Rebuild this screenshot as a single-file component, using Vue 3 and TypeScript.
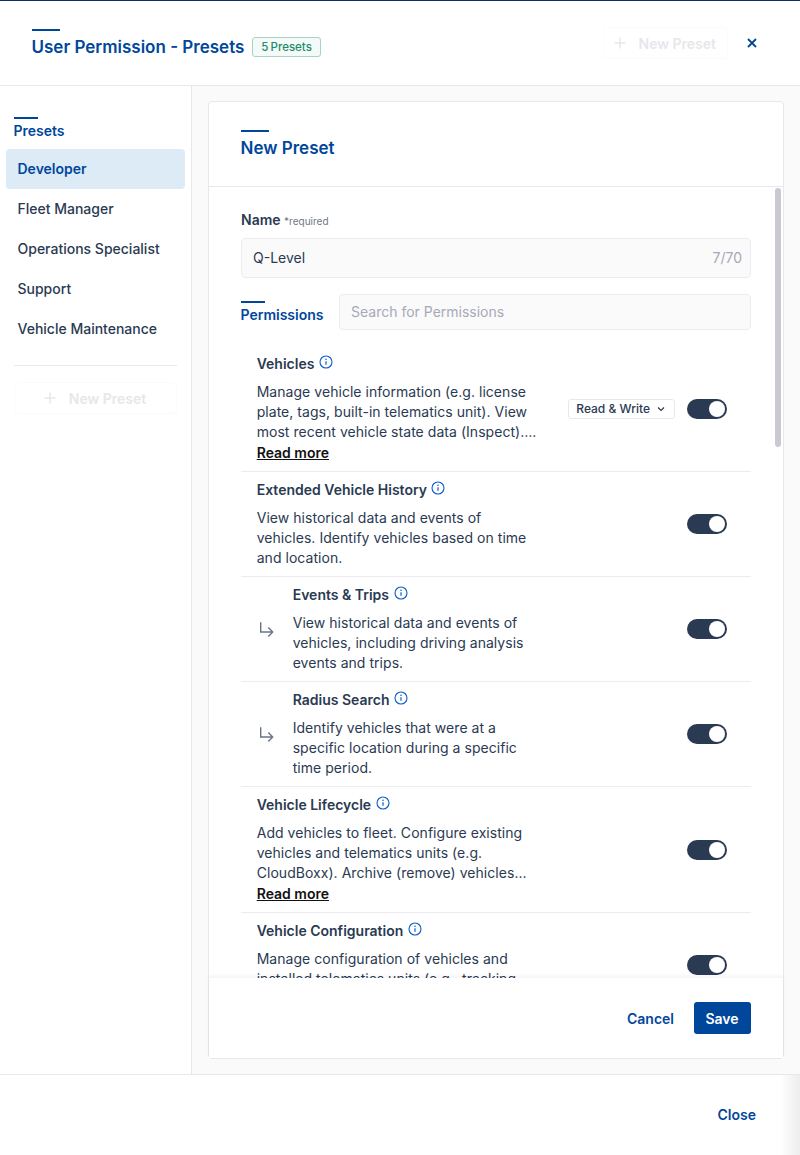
<script setup lang="ts">
interface Permission {
  title: string;
  desc: string;
  child?: boolean;
  more?: boolean;
  access?: string;
}

const presets = ['Developer', 'Fleet Manager', 'Operations Specialist', 'Support', 'Vehicle Maintenance'];

const permissions: Permission[] = [
  {
    title: 'Vehicles',
    desc: 'Manage vehicle information (e.g. license plate, tags, built-in telematics unit). View most recent vehicle state data (Inspect)….',
    more: true,
    access: 'Read & Write',
  },
  {
    title: 'Extended Vehicle History',
    desc: 'View historical data and events of vehicles. Identify vehicles based on time and location.',
  },
  {
    title: 'Events & Trips',
    desc: 'View historical data and events of vehicles, including driving analysis events and trips.',
    child: true,
  },
  {
    title: 'Radius Search',
    desc: 'Identify vehicles that were at a specific location during a specific time period.',
    child: true,
  },
  {
    title: 'Vehicle Lifecycle',
    desc: 'Add vehicles to fleet. Configure existing vehicles and telematics units (e.g. CloudBoxx). Archive (remove) vehicles...',
    more: true,
  },
  {
    title: 'Vehicle Configuration',
    desc: 'Manage configuration of vehicles and installed telematics units (e.g., tracking interval, lock settings).',
  },
];
</script>

<template>
  <div class="modal">
    <header class="modal-head">
      <div class="heading">
        <h1 class="title accent">User Permission - Presets</h1>
        <span class="badge">5 Presets</span>
      </div>
      <div class="head-actions">
        <button class="ghost-btn" type="button">
          <svg viewBox="0 0 16 16" width="16" height="16"><path d="M8 2.5v11M2.5 8h11" fill="none" stroke="currentColor" stroke-width="1.4" /></svg>
          New Preset
        </button>
        <svg class="close-x" viewBox="0 0 12 12" width="12" height="12"><path d="M2 2l8 8M10 2l-8 8" fill="none" stroke="currentColor" stroke-width="1.8" /></svg>
      </div>
    </header>

    <div class="modal-body">
      <aside class="sidebar">
        <h2 class="side-title accent">Presets</h2>
        <ul class="preset-list">
          <li v-for="(p, i) in presets" :key="p" class="preset" :class="{ active: i === 0 }">{{ p }}</li>
        </ul>
        <div class="side-rule"></div>
        <button class="ghost-btn wide" type="button">
          <svg viewBox="0 0 16 16" width="16" height="16"><path d="M8 2.5v11M2.5 8h11" fill="none" stroke="currentColor" stroke-width="1.4" /></svg>
          New Preset
        </button>
      </aside>

      <main class="content">
        <section class="card">
          <div class="card-head">
            <h2 class="card-title accent">New Preset</h2>
          </div>

          <div class="card-scroll">
            <div class="thumb"></div>
            <div class="form">
              <div class="name-label">Name <small>*required</small></div>
              <div class="field name-field">
                <span>Q-Level</span>
                <span class="count">7/70</span>
              </div>
              <div class="perm-bar">
                <h3 class="perm-title accent">Permissions</h3>
                <div class="field search-field">Search for Permissions</div>
              </div>

              <div
                v-for="perm in permissions"
                :key="perm.title"
                class="perm-row"
                :class="{ child: perm.child }"
              >
                <svg v-if="perm.child" class="sub-arrow" viewBox="0 0 16 16" width="16" height="16">
                  <path d="M2.7 1.2v9.8h11M10.3 6.5l4.4 4.5-4.4 4.5" fill="none" stroke="currentColor" stroke-width="1.4" />
                </svg>
                <div class="perm-text">
                  <div class="perm-name">
                    {{ perm.title }}
                    <svg class="info" viewBox="0 0 14 14" width="14" height="14">
                      <circle cx="7" cy="7" r="6" fill="none" stroke="currentColor" stroke-width="1.1" />
                      <path d="M7 6.2v3.6" stroke="currentColor" stroke-width="1.2" />
                      <circle cx="7" cy="4.3" r="0.8" fill="currentColor" />
                    </svg>
                  </div>
                  <p class="perm-desc">{{ perm.desc }}</p>
                  <a v-if="perm.more" class="read-more">Read more</a>
                </div>
                <div class="perm-controls">
                  <div v-if="perm.access" class="access">
                    {{ perm.access }}
                    <svg viewBox="0 0 10 10" width="10" height="10"><path d="M2 3.5l3 3 3-3" fill="none" stroke="currentColor" stroke-width="1.2" /></svg>
                  </div>
                  <span class="toggle"><span class="knob"></span></span>
                </div>
              </div>
            </div>
          </div>

          <div class="card-foot">
            <button class="link-btn" type="button">Cancel</button>
            <button class="save-btn" type="button">Save</button>
          </div>
        </section>
      </main>
    </div>

    <footer class="modal-foot">
      <button class="link-btn" type="button">Close</button>
    </footer>
  </div>
</template>

<style>
html,
body {
  margin: 0;
  background: #fff;
}
</style>

<style scoped>
* {
  box-sizing: border-box;
}

.modal {
  width: 800px;
  height: 1155px;
  display: flex;
  flex-direction: column;
  overflow: hidden;
  background: #fff;
  border-top: 1px solid #0b2f66;
  font-family: Inter, "Liberation Sans", sans-serif;
  font-size: 14px;
  line-height: 20px;
  color: #2a3a52;
}

h1,
h2,
h3,
p,
ul {
  margin: 0;
  padding: 0;
}

.accent {
  position: relative;
  color: #00479b;
  font-weight: 600;
}

.accent::before {
  content: "";
  position: absolute;
  left: 0;
  top: -6px;
  width: 28px;
  height: 2px;
  background: #00479b;
}

.modal-head {
  height: 85px;
  flex: none;
  display: flex;
  align-items: center;
  justify-content: space-between;
  padding: 0 42px 0 31.5px;
  border-bottom: 1px solid #e8e8ea;
}

.heading {
  display: flex;
  align-items: center;
  gap: 8px;
  margin-top: 8px;
}

.title {
  font-size: 17px;
  line-height: 24px;
}

.badge {
  height: 20px;
  padding: 0 8px;
  border: 1px solid #a6d3c3;
  border-radius: 3px;
  background: #f4faf8;
  color: #1f8a6a;
  font-size: 11.5px;
  font-weight: 500;
  line-height: 18px;
  word-spacing: -1px;
}

.head-actions {
  display: flex;
  align-items: center;
  gap: 18px;
}

.close-x {
  color: #00479b;
}

.ghost-btn {
  display: flex;
  align-items: center;
  justify-content: center;
  gap: 11px;
  height: 32px;
  padding: 0 11px 0 8px;
  border: 1px solid #fbfbfb;
  border-radius: 4px;
  background: #fff;
  color: #e6e7eb;
  font: 600 14px Inter, sans-serif;
}

.ghost-btn.wide {
  width: 163px;
  margin-left: 14px;
}

.modal-body {
  flex: 1;
  min-height: 0;
  display: flex;
}

.sidebar {
  width: 192px;
  flex: none;
  padding-top: 35px;
  border-right: 1px solid #e8e8ea;
}

.side-title {
  width: max-content;
  margin-left: 13.5px;
  font-size: 14px;
  line-height: 20px;
}

.side-title::before {
  top: -4px;
  width: 24px;
}

.preset-list {
  list-style: none;
  margin-top: 8px;
  padding: 0 6px;
}

.preset {
  height: 40px;
  padding: 0 11.5px;
  border-radius: 4px;
  line-height: 40px;
  font-weight: 500;
}

.preset.active {
  background: #dcebf6;
  color: #00479b;
  font-weight: 600;
}

.side-rule {
  height: 1px;
  margin: 16px 14px;
  background: #e8e8ea;
}

.content {
  flex: 1;
  min-width: 0;
  padding: 15px 16px 15px 16px;
  background: #fafafa;
}

.card {
  height: 100%;
  display: flex;
  flex-direction: column;
  border: 1px solid #e8e8ea;
  border-radius: 4px;
  background: #fff;
}

.card-head {
  height: 85px;
  flex: none;
  padding: 34px 31.5px 0;
  border-bottom: 1px solid #e8e8ea;
}

.card-title {
  width: max-content;
  font-size: 17px;
  line-height: 24px;
}

.card-scroll {
  position: relative;
  flex: 1;
  min-height: 0;
  overflow: hidden;
}

.thumb {
  position: absolute;
  top: 1px;
  right: 2px;
  width: 6px;
  height: 259px;
  border-radius: 3px;
  background: #c9c9d3;
}

.form {
  padding: 23px 32px 0;
}

.name-label {
  font-weight: 600;
}

.name-label small {
  color: #6f7785;
  font-size: 10px;
  font-weight: 400;
}

.field {
  border: 1px solid #ececee;
  border-radius: 4px;
  background: #fafafa;
}

.name-field {
  height: 40px;
  margin-top: 7px;
  display: flex;
  align-items: center;
  justify-content: space-between;
  padding: 0 8px 0 11px;
}

.count {
  color: #a8a9b8;
}

.perm-bar {
  display: flex;
  align-items: flex-end;
  gap: 15.5px;
  margin-top: 16px;
}

.perm-title {
  width: max-content;
  margin-left: -0.5px;
  margin-bottom: 5px;
  font-size: 14px;
  line-height: 20px;
}

.perm-title::before {
  top: -4px;
  width: 24px;
}

.search-field {
  flex: 1;
  height: 36px;
  padding: 0 11px;
  color: #a8a9b8;
  line-height: 34px;
}

.perm-row {
  position: relative;
  display: flex;
  align-items: center;
  justify-content: space-between;
  padding: 8px 24px 8px 15.7px;
  border-bottom: 1px solid #ececee;
}

.perm-bar + .perm-row {
  margin-top: 16px;
}

.perm-row.child {
  padding-left: 51.7px;
}

.sub-arrow {
  position: absolute;
  left: 17px;
  top: 44px;
  color: #6b7486;
}

.perm-text {
  width: 284px;
}

.child .perm-text {
  width: 248px;
}

.perm-name {
  display: flex;
  align-items: center;
  gap: 4.5px;
  margin-bottom: 8px;
  font-weight: 600;
}

.info {
  position: relative;
  top: -2px;
  color: #0b5cc7;
}

.perm-desc {
  font-weight: 400;
  letter-spacing: 0.04px;
}

.read-more {
  display: block;
  height: 21px;
  padding-top: 1px;
  color: #111;
  font-weight: 600;
  text-decoration: underline;
}

.perm-controls {
  display: flex;
  align-items: center;
  gap: 12px;
}

.access {
  display: flex;
  align-items: center;
  gap: 6px;
  height: 20px;
  padding: 0 8px 0 7.5px;
  border: 1px solid #e8e8ea;
  border-radius: 3px;
  font-size: 12px;
  font-weight: 500;
  line-height: 18px;
}

.toggle {
  position: relative;
  display: block;
  width: 40px;
  height: 20px;
  border-radius: 10px;
  background: #2a3a52;
}

.knob {
  position: absolute;
  top: 2px;
  right: 2px;
  width: 16px;
  height: 16px;
  border-radius: 50%;
  background: #fff;
}

.card-foot {
  position: relative;
  height: 80px;
  flex: none;
  display: flex;
  align-items: center;
  justify-content: flex-end;
  gap: 16px;
  padding: 0 32px;
  background: #fff;
  box-shadow: 0 -2px 4px rgba(0, 0, 0, 0.05);
}

.link-btn {
  padding: 0;
  border: 0;
  background: none;
  color: #00479b;
  font: 600 14px Inter, sans-serif;
}

.card-foot .link-btn {
  padding: 0 4px 0 3.5px;
}

.save-btn {
  width: 57px;
  height: 32px;
  padding: 0 1px 0 0;
  border: 0;
  border-radius: 3px;
  background: #00479b;
  color: #fff;
  font: 600 14px Inter, sans-serif;
}

.modal-foot {
  position: relative;
  height: 81px;
  flex: none;
  display: flex;
  align-items: center;
  justify-content: flex-end;
  padding: 0 44px 1px 0;
  border-top: 1px solid #e8e8ea;
}

/* soft edge of whatever sits behind the modal */
.modal-foot::after {
  content: "";
  position: absolute;
  top: 0;
  right: 0;
  bottom: 0;
  width: 20px;
  background: linear-gradient(to right, rgba(0, 0, 0, 0), rgba(0, 0, 0, 0.07));
}
</style>
